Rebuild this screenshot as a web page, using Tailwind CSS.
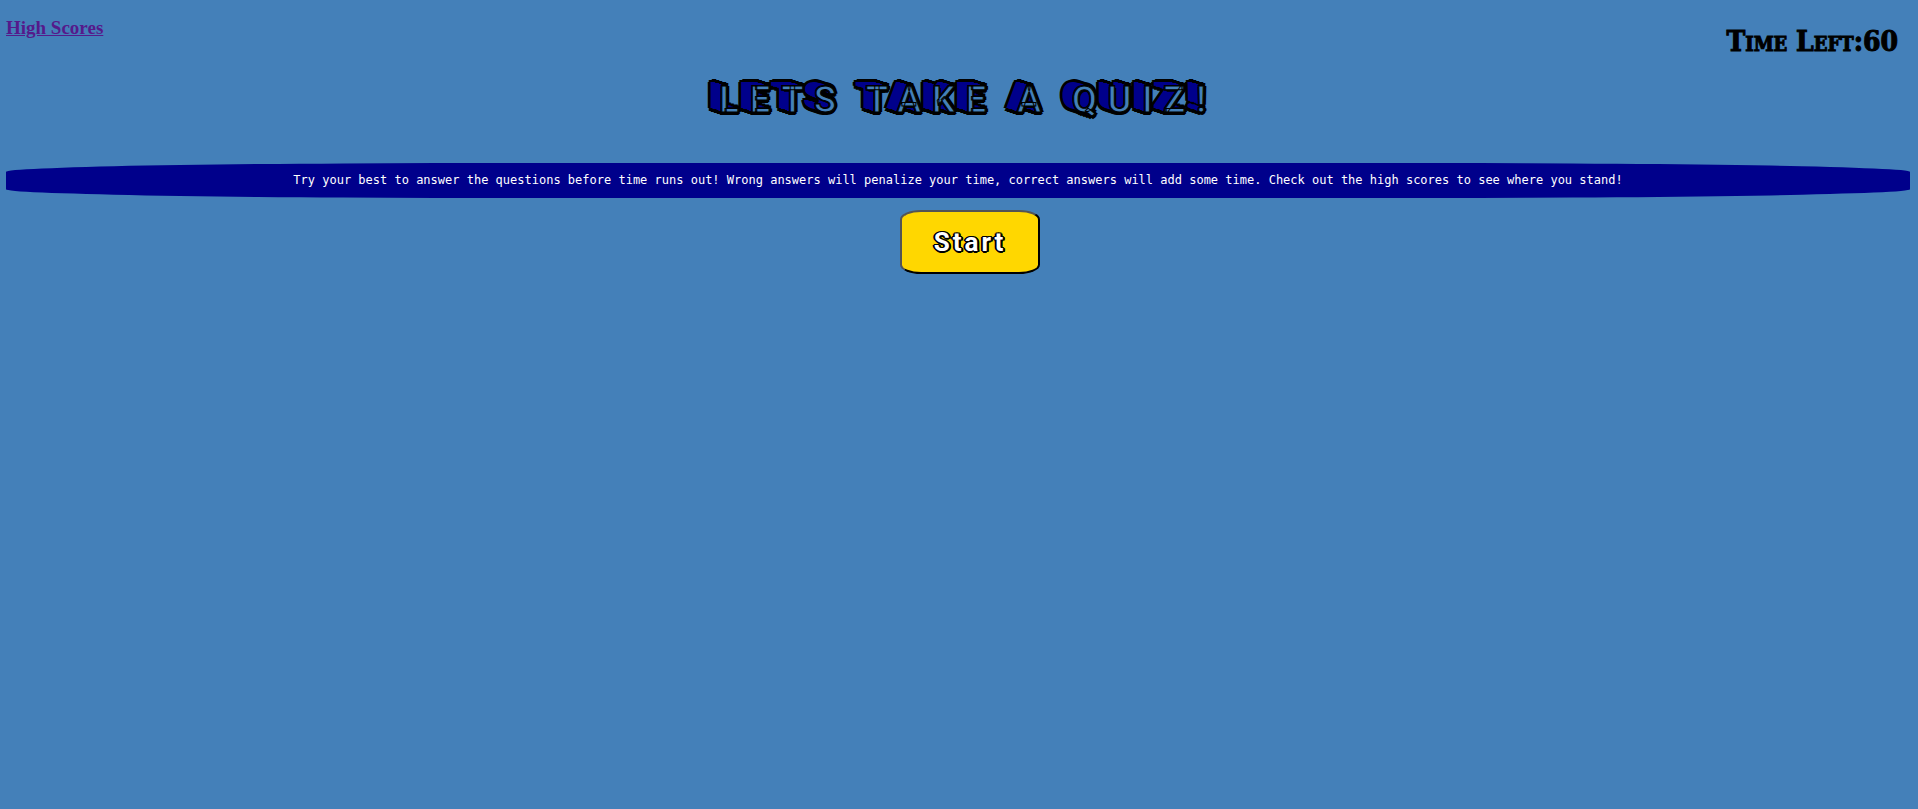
<!DOCTYPE html>
<html lang="en">
<head>
<meta charset="utf-8">
<title>Quiz</title>
<script src="https://cdn.jsdelivr.net/npm/@tailwindcss/browser@4"></script>
</head>
<body class="min-h-screen bg-[#4480b9] pl-1.5 pr-2">
<header class="flex items-start justify-between">
<a href="#scores" class="mt-4 font-['Liberation_Serif',serif] text-[19px] leading-6 font-bold text-[#551a8b] underline">High Scores</a>
<p class="mt-6 mr-3 font-['DejaVu_Serif_Condensed','DejaVu_Serif',serif] text-[28px] leading-9 font-bold text-black [font-variant:small-caps] [-webkit-text-stroke:1px_black]">Time Left:60</p>
</header>
<main class="flex flex-col items-center">
<h1 class="mt-4 pl-5 whitespace-nowrap font-[Roboto,sans-serif] text-4xl leading-12 font-medium tracking-[11px] text-[#4480b9] [-webkit-text-stroke:1px_black] [text-shadow:1px_1px_0_#000,2px_2px_0_#000,1px_-1px_0_#000,-1px_1px_0_#000,-1px_-1px_0_#000,-3px_-1px_0_#00008b,-5px_-2px_0_#00008b,-7px_-3px_0_#00008b,-9px_-3px_0_#00008b,-11px_-4px_0_#00008b,3px_0px_0_#000,1px_3px_0_#000,-2px_3px_0_#000,-5px_2px_0_#000,-8px_1px_0_#000,-11px_0px_0_#000,-13px_-1px_0_#000,-14px_-4px_0_#000,-13px_-6px_0_#000,-10px_-7px_0_#000,-7px_-6px_0_#000,-4px_-5px_0_#000,0px_-4px_0_#000,2px_-3px_0_#000]">LETS TAKE A QUIZ!</h1>
<p class="mt-[39px] w-full rounded-[25%] bg-[#00008b] py-2 text-center font-['DejaVu_Sans_Mono',monospace] text-xs leading-[19px] text-white">Try your best to answer the questions before time runs out! Wrong answers will penalize your time, correct answers will add some time. Check out the high scores to see where you stand!</p>
<button type="button" class="mt-3 ml-6 rounded-[15%] border-2 border-black bg-[#ffd700] px-8 py-3 [border-style:outset] font-[Roboto,sans-serif] text-[26px] leading-9 font-bold tracking-[3px] text-white [text-shadow:1px_1px_0_#000,-1px_-1px_0_#000,1px_-1px_0_#000,-1px_1px_0_#000,2px_1px_0_#000,-2px_0_0_#000,2px_0_0_#000,0_2px_0_#000]">Start</button>
</main>
</body>
</html>
